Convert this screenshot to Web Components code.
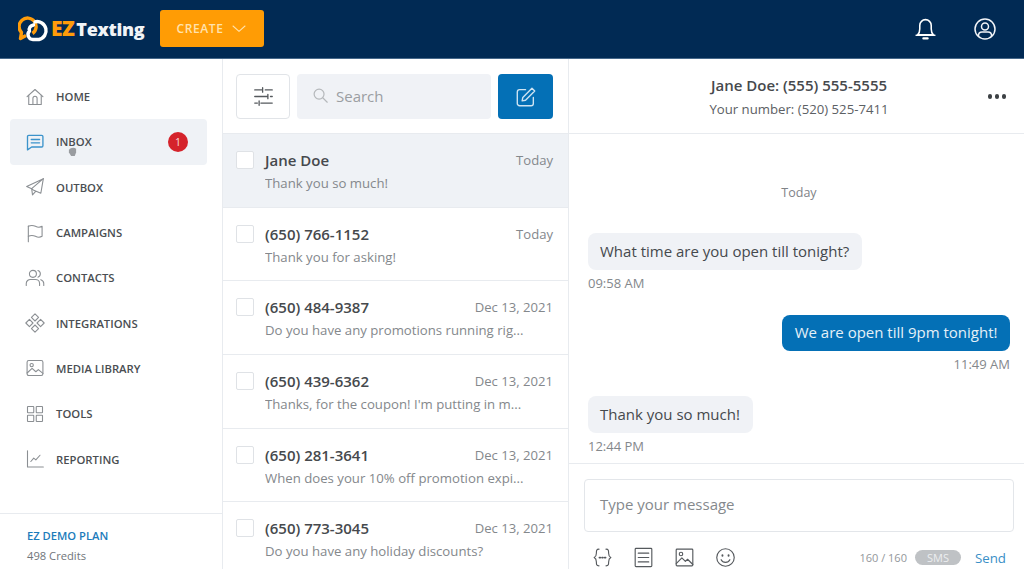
<!DOCTYPE html>
<html lang="en">
<head>
<meta charset="utf-8">
<title>EZ Texting inbox</title>
<style>
html, body { margin: 0; height: 100%; overflow: hidden; background: #fff; }
body { font-family: "Open Sans", "Liberation Sans", sans-serif; color: #3f4347; }
#app { display: flex; flex-direction: column; height: 569px; }
#main { flex: 1; display: grid; grid-template-columns: 223px 346px 1fr; min-height: 0; }
</style>
</head>
<body>
<div id="app">
    <ez-topbar></ez-topbar>
    <div id="main">
        <ez-sidebar plan="EZ DEMO PLAN" credits="498 Credits">
            <ez-nav-item icon="home" label="HOME"></ez-nav-item>
            <ez-nav-item icon="inbox" label="INBOX" badge="1" active></ez-nav-item>
            <ez-nav-item icon="outbox" label="OUTBOX"></ez-nav-item>
            <ez-nav-item icon="flag" label="CAMPAIGNS"></ez-nav-item>
            <ez-nav-item icon="users" label="CONTACTS"></ez-nav-item>
            <ez-nav-item icon="diamonds" label="INTEGRATIONS"></ez-nav-item>
            <ez-nav-item icon="image" label="MEDIA LIBRARY"></ez-nav-item>
            <ez-nav-item icon="grid" label="TOOLS"></ez-nav-item>
            <ez-nav-item icon="chart" label="REPORTING"></ez-nav-item>
        </ez-sidebar>
        <ez-conversations>
            <ez-conv-row name="Jane Doe" date="Today" preview="Thank you so much!" selected></ez-conv-row>
            <ez-conv-row name="(650) 766-1152" date="Today" preview="Thank you for asking!"></ez-conv-row>
            <ez-conv-row name="(650) 484-9387" date="Dec 13, 2021" preview="Do you have any promotions running rig..."></ez-conv-row>
            <ez-conv-row name="(650) 439-6362" date="Dec 13, 2021" preview="Thanks, for the coupon! I'm putting in m..."></ez-conv-row>
            <ez-conv-row name="(650) 281-3641" date="Dec 13, 2021" preview="When does your 10% off promotion expi..."></ez-conv-row>
            <ez-conv-row name="(650) 773-3045" date="Dec 13, 2021" preview="Do you have any holiday discounts?"></ez-conv-row>
        </ez-conversations>
        <ez-chat name="Jane Doe: (555) 555-5555" number="Your number: (520) 525-7411">
            <ez-bubble time="09:58 AM">What time are you open till tonight?</ez-bubble>
            <ez-bubble time="11:49 AM" out>We are open till 9pm tonight!</ez-bubble>
            <ez-bubble time="12:44 PM">Thank you so much!</ez-bubble>
        </ez-chat>
    </div>
</div>

<script>
// stroke icons, all on a 24 box
const ICONS = {
    home: '<path d="M2.5 11.5 12 3l9.5 8.5"/><path d="M4.5 10v11h15V10"/><path d="M9.5 21v-7.5a2.5 2.5 0 0 1 5 0V21"/>',
    inbox: '<path d="M4.5 4h15.500A1.500 1.500 0 0 1 21.500 5.500v11a1.500 1.500 0 0 1-1.500 1.500H8l-5 3.500V5.500A1.500 1.500 0 0 1 4.500 4z"/><path d="M7.500 9h10M7.500 13h10"/>',
    outbox: '<path d="M22 2 2 11.5l6 2.500L22 2z"/><path d="M22 2 19 19.5 10.5 16 8 14l1 7.5 3.5-4"/>',
    flag: '<path d="M4 22.500V3.500"/><path d="M4 4c3-1.500 5.500-1.500 8.500 0s5.500 1.500 8 0v12c-2.500 1.500-5 1.500-8 0s-5.500-1.500-8.500 0"/>',
    users: '<circle cx="9.5" cy="7" r="4.2"/><path d="M1.5 21v-2.5c0-3 2.5-4.800 5-4.800h6c2.500 0 5 1.800 5 4.800V21"/><path d="M15.500 3a4.200 4.200 0 0 1 0 8M19 14c2 .7 3.500 2.300 3.500 4.500V21"/>',
    diamonds: '<path d="m12 1 4.300 4.300L12 9.600 7.700 5.300z"/><path d="m12 14.400 4.300 4.300L12 23l-4.300-4.300z"/><path d="M5.300 7.700 9.600 12l-4.300 4.300L1 12z"/><path d="M18.700 7.700 23 12l-4.300 4.300L14.400 12z"/>',
    image: '<rect x="2.5" y="3" width="19" height="18" rx="2"/><circle cx="8" cy="8.5" r="2"/><path d="m2.5 18 6-5.500 4.500 4 3-2.500 5.500 4.500"/>',
    grid: '<rect x="3" y="3" width="7.5" height="7.5" rx=".6"/><rect x="13.5" y="3" width="7.5" height="7.5" rx=".6"/><rect x="3" y="13.5" width="7.5" height="7.5" rx=".6"/><rect x="13.5" y="13.5" width="7.5" height="7.5" rx=".6"/>',
    chart: '<path d="M3 2v19.500h19"/><path d="m7 15 3.500-4 2.500 2 5-5.500"/>',
    sliders: '<path d="M2 4.500h8M14 4.500h8M11 2v5M2 12h14M20 12h2M17 9.500v5M2 19.500h3M9 19.500h13M7 17v5"/>',
    search: '<circle cx="10" cy="10" r="7"/><path d="m15.500 15.500 6 6"/>',
    compose: '<path d="M11.500 4H5a2.500 2.500 0 0 0-2.500 2.500V19A2.500 2.500 0 0 0 5 21.500h12.500A2.500 2.500 0 0 0 20 19v-6.500"/><path d="M18.500 2.500 21.500 5.500 11.500 15.500 7.800 16.200 8.500 12.500z"/>',
    bell: '<path d="M4.500 18c1.500-1.500 2-3 2-5.500V9a5.500 5.500 0 0 1 11 0v3.500c0 2.500.5 4 2 5.500z"/><path d="M3 18.500h18"/><path d="M10 21.500h4" stroke-width="2.200"/>',
    account: '<circle cx="12" cy="12" r="10"/><circle cx="12" cy="9.500" r="3.500"/><path d="M5.500 19v-.5c0-2 1.500-3.500 3.500-3.500h6c2 0 3.500 1.500 3.500 3.500v.5"/>',
    chevron: '<path d="m3 7.500 9 8 9-8"/>',
    braces: '<path d="M8 2.500c-3 0-3 1.500-3 4.500 0 3-.5 4-2.500 5 2 1 2.500 2 2.500 5 0 3 0 4.500 3 4.500M16 2.500c3 0 3 1.500 3 4.500 0 3 .5 4 2.500 5-2 1-2.500 2-2.500 5 0 3 0 4.500-3 4.500"/><path d="M8.500 12h1M11.500 12h1M14.500 12h1" stroke-width="2"/>',
    lines: '<rect x="2.5" y="1.5" width="19" height="21" rx="1"/><path d="M6 7h12M6 12h12M6 17h12"/>',
    picture: '<rect x="2.5" y="2.5" width="19" height="19" rx="1"/><circle cx="8" cy="8" r="2"/><path d="m2.500 19 6.500-6.500 4 4 2.500-2.500 6 6"/>',
    smile: '<circle cx="12" cy="12" r="10"/><path d="M8.500 9.500v.5M15.500 9.500v.5" stroke-width="2.200"/><path d="M7 14.500c1 2 3 3 5 3s4-1 5-3"/>'
};
function icon(name, size, color, width) {
    return `<svg width="${size}" height="${size}" viewBox="0 0 24 24" fill="none" stroke="${color}" stroke-width="${width || 1.4}" stroke-linecap="round" stroke-linejoin="round">${ICONS[name]}</svg>`;
}

class EzTopbar extends HTMLElement {
    connectedCallback() {
        this.attachShadow({mode: 'open'}).innerHTML = `
<style>
:host { display: flex; align-items: center; height: 59px; flex: none; background: #012a54; box-sizing: border-box; padding: 0 27px 1px 18px; border-bottom: 1px solid #46688a; }
#logo { display: flex; align-items: center; width: 142px; font-weight: 800; line-height: 1; }
#logo svg { margin-right: 1px; flex: none; }
#ez { color: #ff9c0a; font-size: 21px; margin-right: 2px; letter-spacing: -.5px; }
#texting { color: #f1f4f7; font-size: 18px; letter-spacing: -.3px; }
#create { display: flex; align-items: center; justify-content: center; gap: 8px; width: 104px; height: 37px; background: #ff9c05; border-radius: 3px; color: #ffe2ad; font-size: 12px; font-weight: 600; letter-spacing: .6px; }
#right { margin-left: auto; display: flex; align-items: center; gap: 35px; }
#right svg { display: block; }
</style>
<div id="logo">
    <svg width="32" height="26" viewBox="0 0 32 26" fill="none" stroke-width="3.4" stroke-linejoin="round">
        <path d="M14.500 17.500A8.500 8.500 0 1 0 3.500 16.500L2.500 22.500 8 19.500" stroke="#ff9c0a"/>
        <path d="M17 5.800A8.800 8.800 0 1 1 21 23.500H15.500A5 5 0 0 1 11.500 15C10.500 12 12.500 9.500 15.500 9" stroke="#fff" stroke-linecap="round"/>
    </svg>
    <span id="ez">EZ</span><span id="texting">Texting</span>
</div>
<div id="create"><span>CREATE</span>${icon('chevron', 16, '#ffe2ad', 1.6)}</div>
<div id="right">${icon('bell', 25, '#fff', 1.5)}${icon('account', 24, '#f2f4f7', 1.5)}</div>`;
    }
}
customElements.define('ez-topbar', EzTopbar);

class EzSidebar extends HTMLElement {
    connectedCallback() {
        this.attachShadow({mode: 'open'}).innerHTML = `
<style>
:host { display: flex; flex-direction: column; border-right: 1px solid #e8ebef; min-height: 0; }
nav { flex: 1; display: flex; flex-direction: column; padding: 15px 15px 0 10px; }
footer { height: 56px; flex: none; border-top: 1px solid #e8ebef; padding: 12px 0 0 27px; box-sizing: border-box; font-size: 11.2px; line-height: 20px; color: #70757a; }
#plan { color: #1c7cbb; font-weight: 600; }
</style>
<nav><slot></slot></nav>
<footer><div id="plan">${this.getAttribute('plan')}</div><div>${this.getAttribute('credits')}</div></footer>`;
    }
}
customElements.define('ez-sidebar', EzSidebar);

class EzNavItem extends HTMLElement {
    connectedCallback() {
        const active = this.hasAttribute('active');
        const badge = this.getAttribute('badge');
        this.attachShadow({mode: 'open'}).innerHTML = `
<style>
:host { display: flex; align-items: center; height: 45.3px; flex: none; box-sizing: border-box; padding: 0 19px 0 15px; gap: 11px; border-radius: 4px; position: relative; font-size: 11.3px; font-weight: 600; color: #4a4e52; }
:host([active]) { background: #eff2f6; }
svg { flex: none; display: block; }
#badge { margin-left: auto; width: 20px; height: 20px; border-radius: 50%; background: #d5232b; color: #fbdcdc; font-size: 10.5px; font-weight: 400; display: grid; place-items: center; }
#cursor { position: absolute; left: 58px; top: 28px; }
</style>
${icon(this.getAttribute('icon'), 20, active ? '#3b93cb' : '#8b8f93', active ? 1.6 : 1.3)}
<span>${this.getAttribute('label')}</span>
${badge ? `<span id="badge">${badge}</span>` : ''}
${active ? `<svg id="cursor" width="9" height="10" viewBox="0 0 10 11"><path d="M1 3c2-2.500 6-3 8-1v4L7.500 10h-4L1 6z" fill="#999ca0"/></svg>` : ''}`;
    }
}
customElements.define('ez-nav-item', EzNavItem);

class EzConversations extends HTMLElement {
    connectedCallback() {
        this.attachShadow({mode: 'open'}).innerHTML = `
<style>
:host { display: flex; flex-direction: column; border-right: 1px solid #e8ebef; min-height: 0; overflow: hidden; }
#tools { display: flex; gap: 7px; flex: none; height: 75px; box-sizing: border-box; padding: 15px 15px 0 13px; border-bottom: 1px solid #e8ebef; }
#tools > div { height: 45px; box-sizing: border-box; border-radius: 4px; display: flex; align-items: center; justify-content: center; }
#filter { width: 54px; border: 1px solid #e1e4e8; }
#search { flex: 1; background: #f0f2f6; justify-content: flex-start !important; padding: 0 0 2px 15px; gap: 7px; color: #9b9ea2; font-size: 15px; }
#compose { width: 55px; background: #0470b6; }
#rows { flex: 1; min-height: 0; overflow: hidden; }
</style>
<div id="tools">
    <div id="filter">${icon('sliders', 21, '#55595d', 1.5)}</div>
    <div id="search">${icon('search', 17, '#b5b8bb', 1.7)}<span>Search</span></div>
    <div id="compose">${icon('compose', 22, '#cfe4f2', 1.5)}</div>
</div>
<div id="rows"><slot></slot></div>`;
    }
}
customElements.define('ez-conversations', EzConversations);

class EzConvRow extends HTMLElement {
    connectedCallback() {
        this.attachShadow({mode: 'open'}).innerHTML = `
<style>
:host { display: grid; grid-template-columns: 18px 1fr auto; grid-template-rows: 23px 23px; column-gap: 11px; height: 73.7px; box-sizing: border-box; padding: 14.5px 15px 0 13px; border-bottom: 1px solid #e8ebef; align-items: center; }
:host([selected]) { background: #eff2f6; }
#box { width: 18px; height: 18px; box-sizing: border-box; background: #fff; border: 1px solid #dfe2e6; border-radius: 2px; }
#name { font-size: 15px; font-weight: 600; color: #46494d; white-space: nowrap; }
#date { font-size: 13.1px; color: #84888c; }
#preview { grid-column: 2 / 4; grid-row: 2; font-size: 13.2px; color: #84888c; white-space: nowrap; overflow: hidden; }
</style>
<div id="box"></div>
<div id="name"></div>
<div id="date"></div>
<div id="preview"></div>`;
        for (const key of ['name', 'date', 'preview']) {
            this.shadowRoot.getElementById(key).textContent = this.getAttribute(key);
        }
    }
}
customElements.define('ez-conv-row', EzConvRow);

class EzChat extends HTMLElement {
    connectedCallback() {
        this.attachShadow({mode: 'open'}).innerHTML = `
<style>
:host { display: flex; flex-direction: column; min-height: 0; overflow: hidden; }
header { height: 75px; flex: none; box-sizing: border-box; border-bottom: 1px solid #e8ebef; text-align: center; padding: 14px 0 0 5px; position: relative; }
#name { font-size: 15px; font-weight: 600; color: #46494d; line-height: 24px; }
#number { font-size: 13.2px; color: #5c6064; line-height: 25px; }
#dots { position: absolute; right: 18px; top: 35px; display: flex; gap: 2.5px; }
#dots i { width: 4.5px; height: 4.5px; border-radius: 50%; background: #3d4145; }
#thread { flex: 1; min-height: 0; box-sizing: border-box; padding: 0 14px 0 19px; display: flex; flex-direction: column; overflow: hidden; }
#day { text-align: center; font-size: 12.5px; color: #7f8387; padding: 50px 0 0; line-height: 18px; margin-bottom: 30.5px; }
footer { height: 106px; flex: none; box-sizing: border-box; border-top: 1px solid #e8ebef; padding: 15px 10px 0 15px; }
#input { height: 53px; box-sizing: border-box; border: 1px solid #e3e6ea; border-radius: 4px; padding: 0 15px 4px; display: flex; align-items: center; font-size: 15px; color: #85898d; }
#actions { display: flex; align-items: center; margin-top: 15px; padding-left: 8px; gap: 20px; font-size: 11px; color: #93979b; }
#actions svg { display: block; flex: none; }
#meta { margin-left: auto; display: flex; align-items: center; gap: 8px; padding-right: 8px; }
#sms { width: 46px; height: 15px; border-radius: 8px; background: #bfc2c5; color: #eceef0; text-align: center; line-height: 15px; }
#send { color: #3a8fc7; font-size: 13.3px; margin-left: 6px; }
</style>
<header>
    <div id="name">${this.getAttribute('name')}</div>
    <div id="number">${this.getAttribute('number')}</div>
    <div id="dots"><i></i><i></i><i></i></div>
</header>
<div id="thread"><div id="day">Today</div><slot></slot></div>
<footer>
    <div id="input">Type your message</div>
    <div id="actions">
        ${icon('braces', 21, '#55595d', 1.3)}${icon('lines', 21, '#55595d', 1.3)}${icon('picture', 21, '#55595d', 1.3)}${icon('smile', 21, '#55595d', 1.3)}
        <div id="meta"><span>160 / 160</span><span id="sms">SMS</span><span id="send">Send</span></div>
    </div>
</footer>`;
    }
}
customElements.define('ez-chat', EzChat);

const EzBubbleTemplate = document.createElement('template');
EzBubbleTemplate.innerHTML = `
<style>
:host { display: flex; flex-direction: column; align-items: flex-start; flex: none; margin-bottom: 24px; }
:host([out]) { align-items: flex-end; }
#text { background: #f0f2f6; color: #45494d; font-size: 15px; line-height: 20px; padding: 8px 13px 9px 12px; border-radius: 8px; white-space: nowrap; }
:host([out]) #text { background: #0470b6; color: #e4f0f8; padding: 7.5px 12.5px 8.5px; }
#time { font-size: 13px; line-height: 16px; margin-top: 5px; color: #84888c; }
</style>
<div id="text"><slot></slot></div>
<div id="time"></div>`;

class EzBubble extends HTMLElement {
    connectedCallback() {
        this.attachShadow({mode: 'open'}).append(EzBubbleTemplate.content.cloneNode(true));
        this.shadowRoot.getElementById('time').textContent = this.getAttribute('time');
    }
}
customElements.define('ez-bubble', EzBubble);
</script>
</body>
</html>
